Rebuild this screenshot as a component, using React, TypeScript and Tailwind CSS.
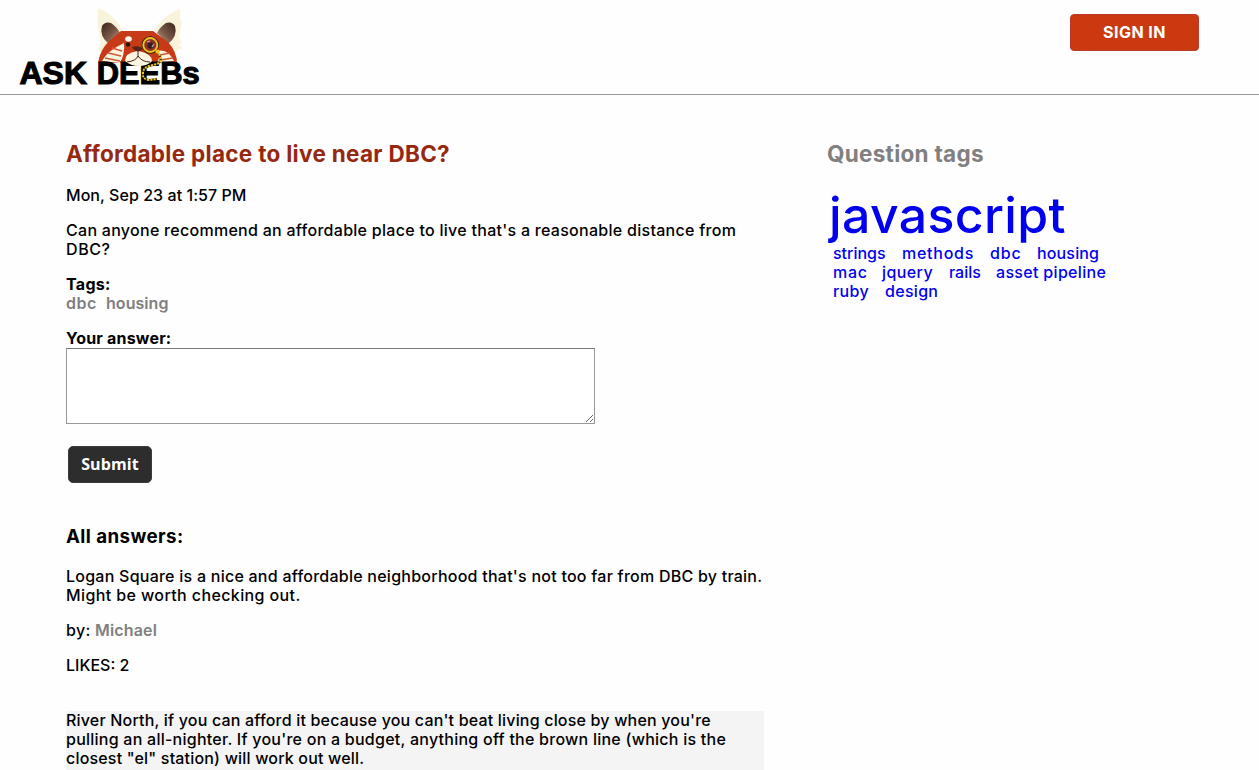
function Logo() {
  return (
    <svg width="205" height="94" viewBox="0 0 205 94" role="img" aria-label="Ask Deebs">
      <defs>
        <linearGradient id="ear" x1="0" y1="0" x2="1" y2="1">
          <stop offset="0" stopColor="#3a2218" />
          <stop offset="0.55" stopColor="#7a5848" />
          <stop offset="1" stopColor="#cdb09a" />
        </linearGradient>
        <linearGradient id="earRight" x1="1" y1="0" x2="0" y2="1">
          <stop offset="0" stopColor="#3a2218" />
          <stop offset="0.55" stopColor="#7a5848" />
          <stop offset="1" stopColor="#cdb09a" />
        </linearGradient>
      </defs>
      <path d="M98 8 Q113 14 123 30 L104 54 L98 50 L101 42 Q96 26 98 8Z" fill="#faf3dc" />
      <path d="M180 9 Q165 14 154 30 L172 54 L178 50 L183 48 L179 45 L182 42 L179 38 L182 22 L180 19Z" fill="#faf3dc" />
      <path d="M102 26 Q105 21 111 23 Q117 27 120 33 L109 44 Q99 36 102 26Z" fill="url(#ear)" />
      <path d="M175 26 Q172 21 166 23 Q160 27 157 33 L168 44 Q178 36 175 26Z" fill="url(#earRight)" />
      <path d="M98 63 Q100 50 109 41 L121 31 L153 31 L168 42 Q177 52 177 63Z" fill="#c63a17" />
      <path d="M124 43 Q107 51 102 61 L120 63 Q125 54 124 43Z M157 51 Q168 48 174 61 L157 63 Q161 56 157 51Z" fill="#fbf5e2" />
      <path d="M112 48 L122 51 M108 53 L121 56 M105 58 L120 61 M170 53 L160 55 M173 58 L160 60" stroke="#d05a35" strokeWidth="1.5" />
      <path d="M134 48 L144 48 Q156 54 157 62 L120 62 Q126 55 134 48Z" fill="#c63a17" />
      <g fontFamily="Liberation Sans, Arial, sans-serif" fontWeight="700" fontSize="31" stroke="#000" strokeWidth="1.1">
        <text x="19.5" y="83.900" textLength="67.500" lengthAdjust="spacingAndGlyphs">ASK</text>
        <text x="96.700" y="83.900" textLength="103" lengthAdjust="spacingAndGlyphs">DEEBs</text>
      </g>
      <path d="M137 51 Q125 53 125 61 Q131 66 138 66 Q148 66 152 61 Q152 54 139 51Z" fill="#fbf5e2" />
      <path d="M138 51 V56 Q136 61 127 62 M138 56 Q142 62 150 62" fill="none" stroke="#4b1f15" strokeWidth="1" />
      <path d="M132 47 Q137 45 143 48 Q141 51.500 138 51.500 Q134 51 132 47Z" fill="#5b241a" />
      <ellipse cx="128.500" cy="39" rx="3.300" ry="2.800" fill="#fffaf0" />
      <circle cx="128" cy="44.500" r="2.200" fill="#251310" />
      <circle cx="150.300" cy="45" r="7" fill="#a52f22" stroke="#2d2100" strokeWidth="3.400" />
      <circle cx="150.300" cy="45" r="7" fill="#8d3029" stroke="#efc319" strokeWidth="1.900" />
      <circle cx="150.500" cy="45.500" r="3" fill="#371d20" />
      <path d="M147 42 L150 41 M152 47 L154 44" stroke="#c4b4ba" strokeWidth="1.200" />
      <circle cx="157.500" cy="51.500" r="2" fill="#efc319" />
      <path d="M159 54 Q163 61 157 64 L149 66 Q143 68 143 73 Q142 79 149 80 L157 79" fill="none" stroke="#3d2f00" strokeWidth="2" />
      <path d="M159 54 Q163 61 157 64 L149 66 Q143 68 143 73 Q142 79 149 80 L157 79" fill="none" stroke="#f2cf26" strokeWidth="1.900" strokeDasharray="1.8 1.4" />
    </svg>
  );
}

const tagRows = [
  [
    { name: "strings", className: "w-[53px]" },
    { name: "methods", className: "w-[72px] tracking-[0.75px]" },
    { name: "dbc", className: "w-[31px] tracking-[0.8px]" },
    { name: "housing", className: "w-[62px] tracking-[0.15px]" },
  ],
  [
    { name: "mac", className: "w-[33px] tracking-[0.7px]" },
    { name: "jquery", className: "w-[51px] tracking-[0.4px]" },
    { name: "rails", className: "w-[31px]" },
    { name: "asset pipeline", className: "w-[111px] tracking-[0.32px]" },
  ],
  [
    { name: "ruby", className: "w-[36px] tracking-[0.35px]" },
    { name: "design", className: "w-[54px] tracking-[0.3px]" },
  ],
];

export default function App() {
  return (
    <div className="h-[770px] w-full overflow-hidden bg-[#fefefe] font-['Inter',sans-serif] text-[16px] font-medium leading-[19px] text-black">
      <header className="flex h-[95px] items-start justify-between border-b border-[#999] pr-[60px]">
        <Logo />
        <button className="mt-[14px] h-[37px] w-[129px] rounded-[4px] border border-[#b83a2a] bg-[#cb3910] text-[16px] font-bold tracking-[0.45px] text-white">SIGN IN</button>
      </header>
      <div className="flex items-start pl-[66px]">
        <main className="w-[698px] shrink-0">
          <h1 className="mt-[45px] text-[22.5px] font-bold leading-[28px] tracking-[0.3px] text-[#962811]">Affordable place to live near DBC?</h1>
          <p className="mt-[18px] tracking-[0.05px]">Mon, Sep 23 at 1:57 PM</p>
          <p className="mt-[16px] whitespace-nowrap tracking-[0.28px]">
            Can anyone recommend an affordable place to live that's a reasonable distance from
            <br />
            <span className="tracking-[0.6px]">DBC?</span>
          </p>
          <p className="mt-[16px] font-bold tracking-[0.3px]">Tags:</p>
          <p className="flex gap-[9px] font-semibold text-[#808080]">
            <span className="w-[31px] tracking-[0.5px]">dbc</span>
            <span className="tracking-[0.05px]">housing</span>
          </p>
          <label className="mt-[16px] block font-bold tracking-[0.2px]">Your answer:</label>
          <textarea className="block h-[76px] w-[529px] border border-[#999] border-t-[#777] bg-white" />
          <button className="ml-[2px] mt-[22px] block h-[37px] w-[84px] rounded-[5px] border border-[#3c3c3c] bg-[#2d2d2d] font-['Open_Sans',sans-serif] font-bold tracking-[0.1px] text-white">Submit</button>
          <h2 className="mt-[42px] text-[18.7px] font-bold leading-[23px] tracking-[0.42px]">All answers:</h2>
          <p className="mt-[19px] whitespace-nowrap">
            <span className="tracking-[0.245px]">Logan Square is a nice and affordable neighborhood that's not too far from DBC by train.</span>
            <br />
            <span className="tracking-[0.39px]">Might be worth checking out.</span>
          </p>
          <p className="mt-[16px] tracking-[0.3px]">
            by: <span className="font-semibold tracking-[0.15px] text-[#808080]">Michael</span>
          </p>
          <p className="mt-[16px]">LIKES: 2</p>
          <p className="mt-[36px] h-[59px] whitespace-nowrap bg-[#f4f4f4]">
            <span className="tracking-[0.185px]">River North, if you can afford it because you can't beat living close by when you're</span>
            <br />
            <span className="tracking-[0.245px]">pulling an all-nighter. If you're on a budget, anything off the brown line (which is the</span>
            <br />
            <span className="tracking-[0.18px]">closest "el" station) will work out well.</span>
          </p>
        </main>
        <aside className="ml-[63px] w-[300px] shrink-0">
          <h2 className="mt-[45px] text-[22.5px] font-bold leading-[28px] tracking-[0.28px] text-[#808080]">Question tags</h2>
          <div className="pl-[6px] text-[#0000ee]">
            <p className="-ml-[4px] mt-[18px] text-[50px] leading-[58px] tracking-[0.35px]">javascript</p>
            {tagRows.map((row, i) => (
              <p key={i} className="flex gap-4 whitespace-nowrap">
                {row.map((tag) => (
                  <a key={tag.name} className={tag.className}>{tag.name}</a>
                ))}
              </p>
            ))}
          </div>
        </aside>
      </div>
    </div>
  );
}
